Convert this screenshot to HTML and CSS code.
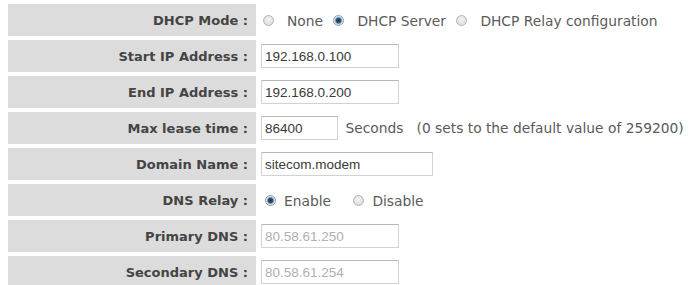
FILE: index.html
```html
<!DOCTYPE html>
<html lang="en">
<head>
<meta charset="UTF-8">
<title>DHCP Server</title>
<link rel="stylesheet" href="styles.css">
</head>
<body>

<table class="setup">
  <tr>
    <td class="label">DHCP Mode :</td>
    <td class="value">
      <label class="opt mode"><input type="radio" name="mode"> None</label>
      <label class="opt mode"><input type="radio" name="mode" checked> DHCP Server</label>
      <label class="opt mode"><input type="radio" name="mode"> DHCP Relay configuration</label>
    </td>
  </tr>
  <tr>
    <td class="label">Start IP Address :</td>
    <td class="value"><input type="text" class="ip" value="192.168.0.100"></td>
  </tr>
  <tr>
    <td class="label">End IP Address :</td>
    <td class="value"><input type="text" class="ip" value="192.168.0.200"></td>
  </tr>
  <tr>
    <td class="label">Max lease time :</td>
    <td class="value">
      <input type="text" class="lease" value="86400">
      <span class="note">Seconds&nbsp;&nbsp;&nbsp;(0 sets to the default value of 259200)</span>
    </td>
  </tr>
  <tr>
    <td class="label">Domain Name :</td>
    <td class="value"><input type="text" class="domain" value="sitecom.modem"></td>
  </tr>
  <tr>
    <td class="label">DNS Relay :</td>
    <td class="value">
      <label class="opt relay"><input type="radio" name="relay" checked> Enable</label>
      <label class="opt relay"><input type="radio" name="relay"> Disable</label>
    </td>
  </tr>
  <tr>
    <td class="label">Primary DNS :</td>
    <td class="value"><input type="text" class="ip" value="80.58.61.250" disabled></td>
  </tr>
  <tr>
    <td class="label">Secondary DNS :</td>
    <td class="value"><input type="text" class="ip" value="80.58.61.254" disabled></td>
  </tr>
</table>

</body>
</html>
```

FILE: styles.css
```css
* {
  box-sizing: border-box;
}

body {
  margin: 0;
  background: #fff;
  font-family: "DejaVu Sans", Verdana, sans-serif;
  color: #5a5a5a;
}

.setup {
  margin-left: 4px;
  border-spacing: 4px;
}

.setup tr {
  height: 32px;
}

.label {
  width: 248px;
  padding: 0 8px 0 0;
  background: #dcdcdc;
  text-align: right;
  font-weight: bold;
  font-size: 13px;
  color: #444;
  white-space: nowrap;
}

.value {
  padding: 0 0 0 1px;
  font-size: 13.8px;
  white-space: nowrap;
}

input[type=text] {
  height: 24px;
  margin: 0;
  padding: 1px 3px;
  border: 1px solid #d2d2d2;
  border-top-color: #b8b8b8;
  font-family: "Liberation Sans", Arial, sans-serif;
  font-size: 13.5px;
  color: #3a3a3a;
  background: #fff;
  vertical-align: middle;
}

input[type=text]:disabled {
  color: #b0b0b0;
  background: #fff;
}

.ip {
  width: 138px;
}

.lease {
  width: 77px;
}

.domain {
  width: 172px;
}

.note {
  margin-left: 3px;
  vertical-align: middle;
}

.opt {
  display: inline-flex;
  align-items: center;
  vertical-align: middle;
}

.opt input {
  appearance: none;
  -webkit-appearance: none;
  width: 11px;
  height: 11px;
  margin: 0;
  border: 1px solid #b4b4b4;
  border-radius: 50%;
  background: radial-gradient(circle at 50% 40%, #f4f4f4 0, #d6d6d6 100%);
}

.opt input:checked {
  border-color: #8fa0ac;
  background: radial-gradient(circle, #1a3650 0, #2b5272 2.2px, #a3bccd 3.4px, #eef2f5 4.5px);
}

.mode {
  margin-left: 2px;
  margin-right: 4px;
}

.mode input {
  margin-right: 13px;
}

.relay {
  margin-left: 4px;
  margin-right: 14px;
}

.relay input {
  margin-right: 8px;
}
```
